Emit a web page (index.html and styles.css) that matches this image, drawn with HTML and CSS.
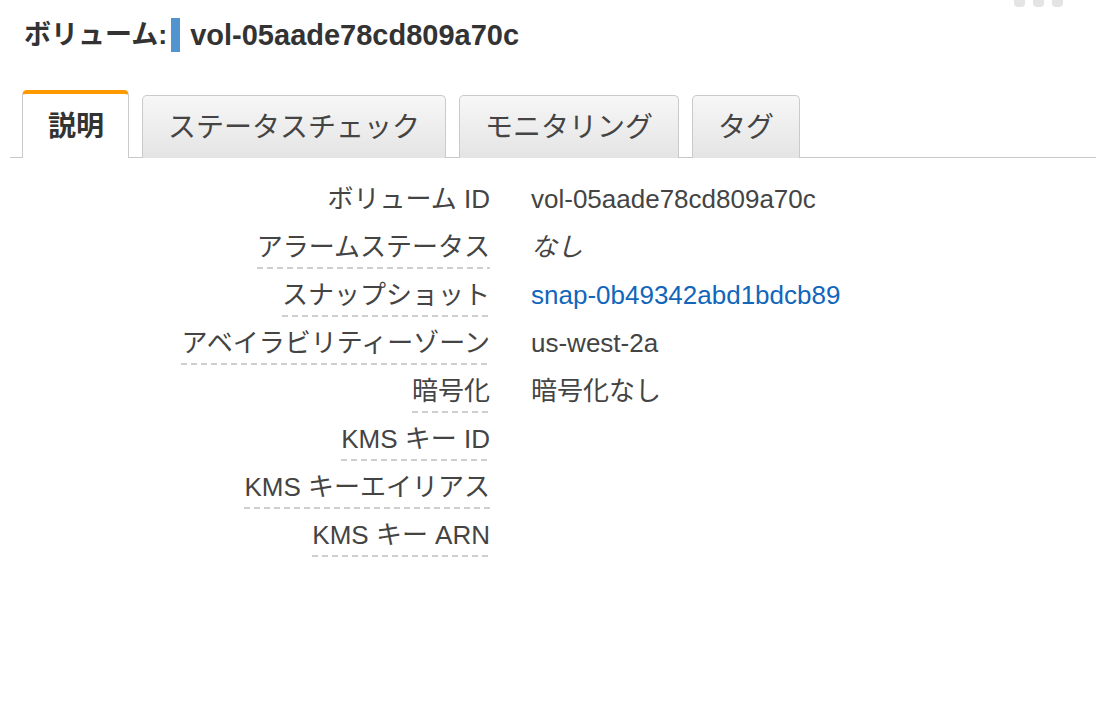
FILE: index.html
```html
<!DOCTYPE html>
<html lang="ja">
<head>
<meta charset="utf-8">
<title>ボリューム</title>
<link rel="stylesheet" href="styles.css">
</head>
<body>
<div class="toolbar">
  <span class="dot"></span><span class="dot"></span><span class="dot"></span>
</div>
<h1 class="title"><span class="title-kana">ボリューム:</span><span class="mark"></span><span class="title-id">vol-05aade78cd809a70c</span></h1>
<div class="tabs">
  <div class="tab active">説明</div>
  <div class="tab">ステータスチェック</div>
  <div class="tab">モニタリング</div>
  <div class="tab">タグ</div>
</div>
<div class="details">
  <div class="label plain">ボリューム ID</div><div class="value">vol-05aade78cd809a70c</div>
  <div class="label">アラームステータス</div><div class="value em">なし</div>
  <div class="label">スナップショット</div><div class="value"><a class="link" href="#">snap-0b49342abd1bdcb89</a></div>
  <div class="label">アベイラビリティーゾーン</div><div class="value">us-west-2a</div>
  <div class="label">暗号化</div><div class="value">暗号化なし</div>
  <div class="label">KMS キー ID</div><div class="value"></div>
  <div class="label">KMS キーエイリアス</div><div class="value"></div>
  <div class="label">KMS キー ARN</div><div class="value"></div>
</div>
</body>
</html>
```
FILE: styles.css
```css
html, body {
  margin: 0;
  padding: 0;
  background: #fff;
}
body {
  font-family: "Liberation Sans", "Noto Sans CJK JP", sans-serif;
  color: #444;
  width: 1096px;
  height: 702px;
  overflow: hidden;
  position: relative;
}
.toolbar {
  position: absolute;
  top: 0;
  right: 33px;
  display: flex;
  gap: 8px;
}
.dot {
  width: 11px;
  height: 7px;
  background: #e4e4e4;
  border-radius: 0 0 4px 4px;
}
.title {
  margin: 0;
  padding: 17px 0 0 24px;
  height: 36px;
  font-weight: bold;
  color: #333;
  display: flex;
  align-items: center;
}
.title-kana {
  font-size: 27px;
  line-height: 36px;
}
.title-id {
  font-size: 29px;
  line-height: 36px;
}
.mark {
  display: inline-block;
  width: 9px;
  height: 34px;
  background: #5294cf;
  margin: 0 10px 0 4px;
}
.tabs {
  display: flex;
  align-items: flex-end;
  gap: 13px;
  margin: 37px 0 0 10px;
  padding-left: 12px;
  border-bottom: 1px solid #c8c8c8;
  height: 67px;
}
.tab {
  box-sizing: border-box;
  height: 63px;
  padding: 0 25px;
  border: 1px solid #cacaca;
  border-bottom: none;
  border-radius: 5px 5px 0 0;
  background: linear-gradient(#f7f7f7, #e4e4e4);
  font-size: 28px;
  line-height: 63px;
  color: #444;
  white-space: nowrap;
  margin-bottom: -1px;
}
.tab.active {
  height: 68px;
  padding: 0 24px 0 25px;
  background: #fff;
  border-top: 4px solid #ff9900;
  font-weight: bold;
  color: #333;
  line-height: 66px;
}
.details {
  display: grid;
  grid-template-columns: 490px 1fr;
  grid-auto-rows: 48px;
  column-gap: 41px;
  padding-top: 18px;
  font-size: 26px;
}
.label {
  justify-self: end;
  margin-top: 8px;
  line-height: 31px;
  height: 31px;
  padding-bottom: 6px;
  background: repeating-linear-gradient(to right, #cfcfcf 0 6px, transparent 6px 10px) left bottom / 100% 2px no-repeat;
  white-space: nowrap;
}
.label.plain {
  background: none;
}
.value {
  margin-top: 8px;
  line-height: 31px;
  white-space: nowrap;
}
.em {
  font-style: italic;
}
.link {
  color: #1166bb;
  text-decoration: none;
}
```
